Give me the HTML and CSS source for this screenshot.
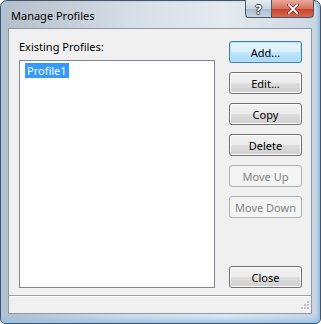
FILE: index.html
```html
<!DOCTYPE html>
<html lang="en">
<head>
  <meta charset="UTF-8">
  <title>Manage Profiles</title>
  <link rel="stylesheet" href="styles.css">
</head>
<body>
  <div class="window">
    <div class="titlebar">
      <span class="title">Manage Profiles</span>
      <div class="caption-buttons">
        <span class="cap-btn help">?</span>
        <span class="cap-btn close">
          <svg width="12" height="10" viewBox="0 0 12 10">
            <path d="M2 1 L10 9 M10 1 L2 9" stroke="#6a2a22" stroke-width="3.2" stroke-linecap="square"/>
            <path d="M2 1 L10 9 M10 1 L2 9" stroke="#fff" stroke-width="1.8" stroke-linecap="square"/>
          </svg>
        </span>
      </div>
    </div>
    <div class="client">
      <div class="main">
        <div class="list-col">
          <div class="label">Existing Profiles:</div>
          <div class="listbox">
            <span class="item selected">Profile1</span>
          </div>
        </div>
        <div class="button-col">
          <button class="default">Add...</button>
          <button>Edit...</button>
          <button>Copy</button>
          <button>Delete</button>
          <button disabled>Move Up</button>
          <button disabled>Move Down</button>
          <div class="spacer"></div>
          <button>Close</button>
        </div>
      </div>
      <div class="statusbar">
        <svg class="grip" width="11" height="11" viewBox="0 0 11 11">
          <g fill="#c4c4c4">
            <rect x="8" y="0" width="2" height="2"/>
            <rect x="5" y="3" width="2" height="2"/><rect x="8" y="3" width="2" height="2"/>
            <rect x="2" y="6" width="2" height="2"/><rect x="5" y="6" width="2" height="2"/><rect x="8" y="6" width="2" height="2"/>
          </g>
        </svg>
      </div>
    </div>
  </div>
</body>
</html>
```

FILE: styles.css
```css
body {
  margin: 0;
  background: #fff;
  font-family: "Noto Sans", "Open Sans", sans-serif;
  font-size: 11px;
}
.window {
  width: 321px;
  height: 324px;
  box-sizing: border-box;
  border: 1px solid #4a5460;
  border-radius: 7px 7px 5px 5px;
  background: linear-gradient(to right, #b4bfca 0%, #d5dde6 40%, #e4eaf0 70%, #c9d6e2 100%);
  padding: 0 8px 9px 7px;
  display: flex;
  flex-direction: column;
  box-shadow: inset 0 -6px 6px -3px #8ec2ee, inset 3px 0 3px -1px #a9c7e4, inset -3px 0 3px -1px #8fb9e0;
}
.titlebar {
  height: 27px;
  display: flex;
  align-items: flex-start;
  margin-right: -2px;
}
.title {
  flex: 1;
  padding: 7px 0 0 3px;
  color: #000;
  font-size: 11px;
}
.caption-buttons {
  display: flex;
  margin-top: -1px;
}
.cap-btn {
  height: 18px;
  box-sizing: border-box;
  border: 1px solid #4c5866;
  border-top: none;
  display: flex;
  align-items: center;
  justify-content: center;
}
.help {
  width: 26px;
  border-right: none;
  border-radius: 0 0 0 4px;
  background: linear-gradient(#e7edf3 0%, #c9d4df 50%, #aebdcc 51%, #c4d3e0 100%);
  color: #fff;
  font-weight: bold;
  font-size: 13px;
  text-shadow: 1px 0 0 #3a4450, -1px 0 0 #3a4450, 0 1px 0 #3a4450, 0 -1px 0 #3a4450;
}
.close {
  width: 43px;
  border-radius: 0 0 4px 0;
  background: linear-gradient(#e9a89c 0%, #d7705f 50%, #c4412c 51%, #d56a4f 100%);
}
.client {
  flex: 1;
  background: #f0f0f0;
  border: 1px solid #8b99a8;
  display: flex;
  flex-direction: column;
}
.main {
  flex: 1;
  display: flex;
  padding: 10px 9px 7px 10px;
  gap: 14px;
}
.list-col {
  flex: 1;
  display: flex;
  flex-direction: column;
}
.label {
  line-height: 15px;
  margin-bottom: 6px;
}
.listbox {
  flex: 1;
  background: #fff;
  border: 1px solid #828790;
  padding: 2px 5px;
}
.item {
  display: inline-block;
  padding: 0 2px;
  line-height: 15px;
}
.selected {
  background: #3399ff;
  color: #fff;
}
.button-col {
  width: 73px;
  display: flex;
  flex-direction: column;
  gap: 9px;
  padding-top: 2px;
}
.spacer {
  flex: 1;
}
button {
  height: 22px;
  font-family: inherit;
  font-size: 11px;
  color: #000;
  border: 1px solid #707070;
  border-radius: 3px;
  background: linear-gradient(#f2f2f2 0%, #ebebeb 50%, #dddddd 51%, #cfcfcf 100%);
  box-shadow: inset 0 0 0 1px #fcfcfc;
  padding: 0;
}
button.default {
  border-color: #3c7fb1;
  background: linear-gradient(#eaf6fd 0%, #d9f0fc 50%, #bee6fd 51%, #a7d9f5 100%);
  box-shadow: inset 0 0 0 1px #b7e3f9;
}
button:disabled {
  border-color: #adb2b5;
  background: #f4f4f4;
  color: #838383;
  box-shadow: none;
}
.statusbar {
  height: 16px;
  border-top: 1px solid #a0a0a0;
  box-shadow: inset 0 1px 0 #fff;
  display: flex;
  justify-content: flex-end;
  align-items: flex-end;
  padding: 0 1px 1px 0;
}
```
